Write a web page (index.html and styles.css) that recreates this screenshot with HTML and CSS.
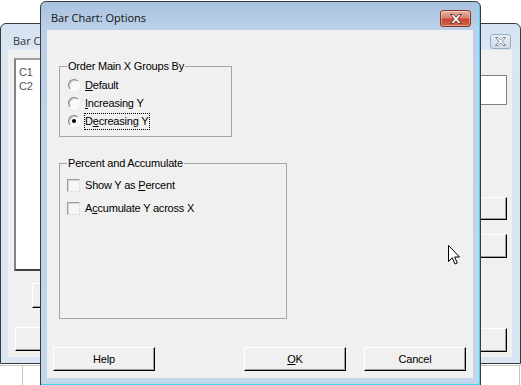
FILE: index.html
```html
<!DOCTYPE html>
<html lang="en">
<head>
  <title>Bar Chart: Options</title>
  <link rel="stylesheet" href="styles.css">
</head>
<body>
  <div class="desktop">
    <div class="sheet"></div>

    <!-- main dialog, partly hidden behind the options dialog -->
    <div class="window back">
      <div class="titlebar">
        <span class="title">Bar Chart</span>
        <span class="close">
          <svg width="11" height="9" viewBox="0 0 11 9"><polygon points="0.5,0.5 3,0.5 5.5,3 8,0.5 10.5,0.5 7,4.5 10.5,8.5 8,8.5 5.5,6 3,8.5 0.5,8.5 4,4.5" fill="#fff" stroke="#7d8796" stroke-width="1"/></svg>
        </span>
      </div>
      <div class="client">
        <div class="col-left">
          <div class="varlist">
            <div>C1</div>
            <div>C2</div>
          </div>
          <div class="btn stub">Select</div>
          <div class="btn stub-help">Help</div>
        </div>
        <div class="col-right">
          <div class="box"></div>
          <div class="btn side-1">Scale...</div>
          <div class="btn side-2">Labels...</div>
          <div class="btn side-3">Cancel</div>
        </div>
      </div>
    </div>

    <!-- options dialog -->
    <div class="window front">
      <div class="titlebar">
        <span class="title">Bar Chart: Options</span>
        <span class="close">
          <svg width="12" height="10" viewBox="0 0 12 10"><polygon points="0.5,0.5 3.5,0.5 6,3.2 8.5,0.5 11.5,0.5 7.7,5 11.5,9.5 8.5,9.5 6,6.8 3.5,9.5 0.5,9.5 4.3,5" fill="#fff" stroke="#6b3a33" stroke-width="1"/></svg>
        </span>
      </div>
      <div class="client">
        <fieldset class="group order">
          <legend>Order Main X Groups By</legend>
          <div class="option">
            <span class="radio"></span>
            <span class="label"><u>D</u>efault</span>
          </div>
          <div class="option">
            <span class="radio"></span>
            <span class="label"><u>I</u>ncreasing Y</span>
          </div>
          <div class="option">
            <span class="radio checked"></span>
            <span class="label focused">D<u>e</u>creasing Y</span>
          </div>
        </fieldset>

        <fieldset class="group percent">
          <legend>Percent and Accumulate</legend>
          <div class="option tall">
            <span class="check"></span>
            <span class="label">Show Y as <u>P</u>ercent</span>
          </div>
          <div class="option tall">
            <span class="check"></span>
            <span class="label">A<u>c</u>cumulate Y across X</span>
          </div>
        </fieldset>

        <div class="buttons">
          <div class="btn">Help</div>
          <div class="right-buttons">
            <div class="btn"><u>O</u>K</div>
            <div class="btn">Cancel</div>
          </div>
        </div>
      </div>
    </div>

    <svg class="cursor" width="13" height="20" viewBox="0 0 13 20">
      <path d="M0.5 0.5 V16.5 L4.3 12.8 L7 19 L9.3 18 L6.7 12 H11.5 Z" fill="#fff" stroke="#000" stroke-width="1" stroke-linejoin="round"/>
    </svg>
  </div>
</body>
</html>
```

FILE: styles.css
```css
body {
  margin: 0;
  background-color: #fff;
  font-family: "Liberation Sans", Arial, sans-serif;
  font-size: 11px;
  letter-spacing: -0.2px;
  color: #000;
}

.desktop {
  position: relative;
  width: 521px;
  height: 385px;
  overflow: hidden;
  background-color: #fff;
}

/* worksheet grid below the windows */
.sheet {
  position: absolute;
  left: 0;
  right: 0;
  top: 365px;
  bottom: 0;
  border-top: 1px solid #c6c6c6;
  background:
    linear-gradient(to right, transparent 22px, #c6c6c6 22px, #c6c6c6 23px, transparent 23px),
    linear-gradient(to right, transparent 519px, #c6c6c6 519px, #c6c6c6 520px, transparent 520px);
}

.window {
  position: absolute;
  box-sizing: border-box;
  border: 1px solid #3a3a3a;
  border-radius: 6px 6px 0 0;
  display: flex;
  flex-direction: column;
}

.titlebar {
  display: flex;
  align-items: flex-start;
  flex-shrink: 0;
}

.title {
  font-family: "Open Sans", "Noto Sans", sans-serif;
  font-size: 11px;
  letter-spacing: 0;
  line-height: 14px;
}

.close {
  margin-left: auto;
  display: flex;
  align-items: center;
  justify-content: center;
  box-sizing: border-box;
  border-radius: 3px;
}

.client {
  flex: 1;
  background-color: #f0f0f0;
}

/* back window */
.back {
  left: 0;
  top: 23px;
  width: 521px;
  height: 341px;
  padding: 0 8px 6px 7px;
  background: linear-gradient(#d5e2f1, #dbe6f3 26px, #d9e5f2);
}

.back .titlebar {
  height: 26px;
}

.back .title {
  margin: 10px 0 0 5px;
  color: #333;
}

.back .close {
  width: 21px;
  height: 15px;
  margin: 10px 1px 0 auto;
  border: 1px solid #9aabc0;
  background: linear-gradient(#e6edf6, #cfdbea);
}

.back .client {
  display: flex;
  justify-content: space-between;
}

.col-left {
  display: flex;
  flex-direction: column;
  align-items: flex-start;
  padding: 8px 0 0 6px;
}

.varlist {
  box-sizing: border-box;
  width: 150px;
  height: 213px;
  background-color: #fff;
  border: 2px solid;
  border-color: #a0a0a0 #404040 #404040 #828282;
  padding: 5px 3px;
  line-height: 14px;
  color: #555;
}

.col-right {
  display: flex;
  flex-direction: column;
  align-items: flex-end;
  padding: 25px 5px 0 0;
}

.box {
  width: 100px;
  height: 28px;
  background-color: #fff;
  border: 1px solid #808080;
}

.btn {
  box-sizing: border-box;
  width: 102px;
  height: 24px;
  background-color: #f0f0f0;
  border: 1px solid;
  border-color: #fff #000 #000 #fff;
  box-shadow: inset -1px -1px 0 #a0a0a0;
  display: flex;
  align-items: center;
  justify-content: center;
}

.stub {
  width: 80px;
  height: 25px;
  margin: 12px 0 0 18px;
}

.stub-help {
  margin: 19px 0 0 1px;
}

.side-1 {
  height: 23px;
  margin-top: 92px;
}

.side-2 {
  margin-top: 14px;
}

.side-3 {
  margin-top: 70px;
}

/* front dialog */
.front {
  left: 40px;
  top: 1px;
  width: 441px;
  height: 385px;
  padding: 0 7px 7px 6px;
  background: linear-gradient(#a9c2de, #bcd1e9 28px, #c2d6ec);
  box-shadow: inset -1px -1px 0 #3ed6ee;
}

.front .titlebar {
  height: 28px;
}

.front .title {
  margin: 9px 0 0 4px;
  color: #111;
}

.front .close {
  width: 31px;
  height: 17px;
  margin: 8px 2px 0 auto;
  border: 1px solid #8a3426;
  background: linear-gradient(#eab3a4, #d8826e 45%, #c5472f 55%, #d0654b);
  box-shadow: inset 0 0 0 1px rgba(255, 255, 255, 0.35);
}

.front .client {
  display: flex;
  flex-direction: column;
  padding: 0 7px 7px 6px;
}

.group {
  box-sizing: border-box;
  margin: 0 0 0 6px;
  padding: 0;
  border: 1px solid #a5a5a5;
  min-width: 0;
}

.group legend {
  margin-left: 7px;
  padding: 0 1px;
  line-height: 13px;
}

.order {
  width: 173px;
  height: 77px;
  margin-top: 30px;
  padding-top: 3px;
}

.order .option {
  padding-left: 8px;
}

.percent {
  width: 228px;
  height: 162px;
  margin-top: 20px;
  padding-top: 4px;
}

.percent .option {
  padding-left: 7px;
}

.option {
  display: flex;
  align-items: center;
  height: 18px;
}

.option.tall {
  height: 23px;
}

.radio {
  box-sizing: border-box;
  width: 12px;
  height: 12px;
  margin-right: 4px;
  border-radius: 50%;
  border: 1px solid;
  border-color: #858585 #fff #fff #858585;
  background-color: #f9f9f9;
  box-shadow: inset 1px 1px 0 #c4c4c4;
  display: flex;
  align-items: center;
  justify-content: center;
}

.radio.checked::after {
  content: "";
  width: 4px;
  height: 4px;
  border-radius: 50%;
  background-color: #000;
}

.check {
  box-sizing: border-box;
  width: 13px;
  height: 13px;
  margin-right: 4px;
  border: 1px solid;
  border-color: #9c9c9c #e4e4e4 #e4e4e4 #9c9c9c;
  background-color: #f6f6f6;
  box-shadow: inset 1px 1px 0 #d6d6d6;
}

.label {
  border: 1px dotted transparent;
  padding: 0 1px 0 0;
  line-height: 15px;
}

.label.focused {
  border-color: #000;
}

.buttons {
  margin-top: auto;
  display: flex;
  justify-content: space-between;
}

.right-buttons {
  display: flex;
  gap: 18px;
}

.cursor {
  position: absolute;
  left: 448px;
  top: 245px;
}
```
